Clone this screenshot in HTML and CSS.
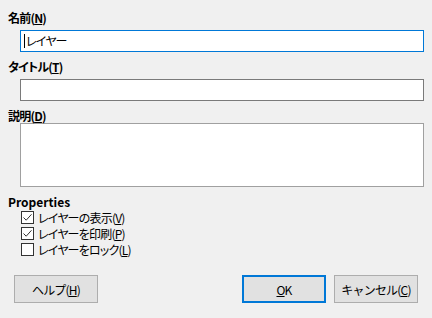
FILE: index.html
```html
<!DOCTYPE html>
<html lang="ja">
<head>
    <meta charset="UTF-8">
    <meta name="viewport" content="width=device-width, initial-scale=1.0">
    <title>レイヤーの挿入</title>
    <link rel="stylesheet" href="styles.css">
</head>
<body>

<div class="dialog">
    <div class="form">
        <div class="field-label">名前(<u>N</u>)</div>
        <div class="text-input focused"><span class="caret"></span>レイヤー</div>

        <div class="field-label">タイトル(<u>T</u>)</div>
        <div class="text-input"></div>

        <div class="field-label">説明(<u>D</u>)</div>
        <div class="text-area"></div>

        <div class="field-label latin">Properties</div>
        <div class="checks">
            <label class="check-row">
                <span class="check-box">
                    <svg width="11" height="11" viewBox="0 0 11 11"><path d="M1.5 5.5 L4.2 8.2 L9.5 2.3" fill="none" stroke="#333" stroke-width="1"/></svg>
                </span>
                <span>レイヤーの表示(<u>V</u>)</span>
            </label>
            <label class="check-row">
                <span class="check-box">
                    <svg width="11" height="11" viewBox="0 0 11 11"><path d="M1.5 5.5 L4.2 8.2 L9.5 2.3" fill="none" stroke="#333" stroke-width="1"/></svg>
                </span>
                <span>レイヤーを印刷(<u>P</u>)</span>
            </label>
            <label class="check-row">
                <span class="check-box"></span>
                <span>レイヤーをロック(<u>L</u>)</span>
            </label>
        </div>
    </div>

    <div class="buttons">
        <button class="btn">ヘルプ(<u>H</u>)</button>
        <div class="spacer"></div>
        <button class="btn default"><u>O</u>K</button>
        <button class="btn">キャンセル(<u>C</u>)</button>
    </div>
</div>

</body>
</html>
```

FILE: styles.css
```css
body {
    margin: 0;
    padding: 0;
    background-color: #f0f0f0;
    font-family: "Noto Sans CJK JP", "Noto Sans", sans-serif;
    font-size: 12px;
    color: #000;
    font-feature-settings: "palt";
    letter-spacing: -0.8px;
}
u {
    text-decoration: underline;
    text-underline-offset: 1px;
}
.dialog {
    width: 432px;
    height: 318px;
    display: flex;
    flex-direction: column;
}
.form {
    padding: 11px 8px 0 8px;
}
.field-label {
    font-weight: bold;
    line-height: 14px;
    height: 14px;
}
.field-label.latin {
    letter-spacing: 0;
}
.text-input {
    box-sizing: border-box;
    height: 22px;
    margin: 5px 0 8px 12px;
    background-color: #fff;
    border: 1px solid #7a7a7a;
    line-height: 20px;
    padding-left: 3px;
    display: flex;
    align-items: center;
}
.text-input.focused {
    border-color: #0078d7;
}
.caret {
    width: 1px;
    height: 14px;
    background-color: #000;
    margin-right: 1px;
}
.text-area {
    box-sizing: border-box;
    height: 64px;
    margin: 0 0 8px 12px;
    background-color: #fff;
    border: 1px solid #a0a0a0;
}
.checks {
    padding-left: 13px;
}
.check-row {
    display: flex;
    align-items: center;
    height: 16px;
    gap: 4px;
}
.check-box {
    box-sizing: border-box;
    width: 13px;
    height: 13px;
    border: 1px solid #333;
    background-color: #fff;
    display: flex;
    align-items: center;
    justify-content: center;
}
.check-box svg {
    display: block;
}
.buttons {
    display: flex;
    padding: 18px 14px 0 14px;
    gap: 8px;
}
.spacer {
    flex: 1;
}
.btn {
    box-sizing: border-box;
    width: 84px;
    height: 28px;
    background-color: #e1e1e1;
    border: 1px solid #adadad;
    font-family: inherit;
    font-size: 12px;
    letter-spacing: -0.8px;
    color: #000;
    padding: 0;
}
.btn.default {
    border: 2px solid #0078d7;
}
```
